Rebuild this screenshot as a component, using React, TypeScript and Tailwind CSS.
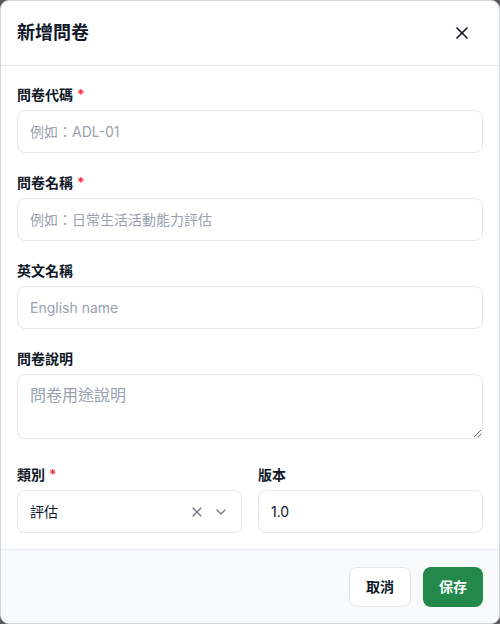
import React from 'react'
import { X, ChevronDown } from 'lucide-react'

const font = { fontFamily: 'Inter, "Noto Sans CJK TC", sans-serif' }

function Label({ text, required }: { text: string; required?: boolean }) {
  return (
    <label className="mb-[5px] flex h-5 items-center gap-1 text-sm font-semibold text-gray-900">
      {text}
      {required && <span className="text-red-500">*</span>}
    </label>
  )
}

function TextInput({ placeholder, value }: { placeholder?: string; value?: string }) {
  return (
    <input
      className="h-[43px] w-full rounded-lg border border-gray-200 bg-white px-3 text-sm text-gray-900 placeholder:text-gray-400 outline-none"
      placeholder={placeholder}
      defaultValue={value}
    />
  )
}

export default function App() {
  return (
    <div className="h-[624px] w-[500px] bg-[#5a5a5a]" style={font}>
      <div className="flex h-full w-full flex-col overflow-hidden rounded-[9px] border border-gray-300 bg-white">
        {/* Header */}
        <div className="flex h-[65px] shrink-0 items-center justify-between border-b border-slate-200 pl-4 pr-[27px]">
          <h2 className="text-lg font-bold text-gray-900">新增問卷</h2>
          <X className="h-5 w-5 text-gray-900" strokeWidth={2} />
        </div>

        {/* Body */}
        <div className="flex flex-1 flex-col gap-5 overflow-hidden px-4 pt-[19px]">
          <div>
            <Label text="問卷代碼" required />
            <TextInput placeholder="例如：ADL-01" />
          </div>
          <div>
            <Label text="問卷名稱" required />
            <TextInput placeholder="例如：日常生活活動能力評估" />
          </div>
          <div>
            <Label text="英文名稱" />
            <TextInput placeholder="English name" />
          </div>
          <div>
            <Label text="問卷說明" />
            <textarea
              className="h-[65px] w-full resize-y rounded-lg border border-gray-200 px-3 py-2 text-base text-gray-900 placeholder:text-gray-400 outline-none"
              placeholder="問卷用途說明"
            />
          </div>
          <div className="grid grid-cols-2 gap-4">
            <div>
              <Label text="類別" required />
              <div className="flex h-[43px] items-center rounded-lg border border-gray-200 bg-white pl-3 pr-3">
                <span className="flex-1 text-sm text-gray-900">評估</span>
                <X className="mr-2 h-4 w-4 text-gray-500" strokeWidth={1.8} />
                <ChevronDown className="h-4 w-4 text-gray-500" strokeWidth={1.8} />
              </div>
            </div>
            <div>
              <Label text="版本" />
              <TextInput value="1.0" />
            </div>
          </div>
        </div>

        {/* Footer */}
        <div className="flex h-[74px] shrink-0 items-center justify-end gap-3 border-t border-slate-200 bg-slate-50 px-4">
          <button className="h-10 rounded-lg border border-gray-200 bg-white px-4 text-sm font-semibold text-gray-900">
            取消
          </button>
          <button className="h-10 rounded-lg bg-[#22894a] px-4 text-sm font-semibold text-white">
            保存
          </button>
        </div>
      </div>
    </div>
  )
}
